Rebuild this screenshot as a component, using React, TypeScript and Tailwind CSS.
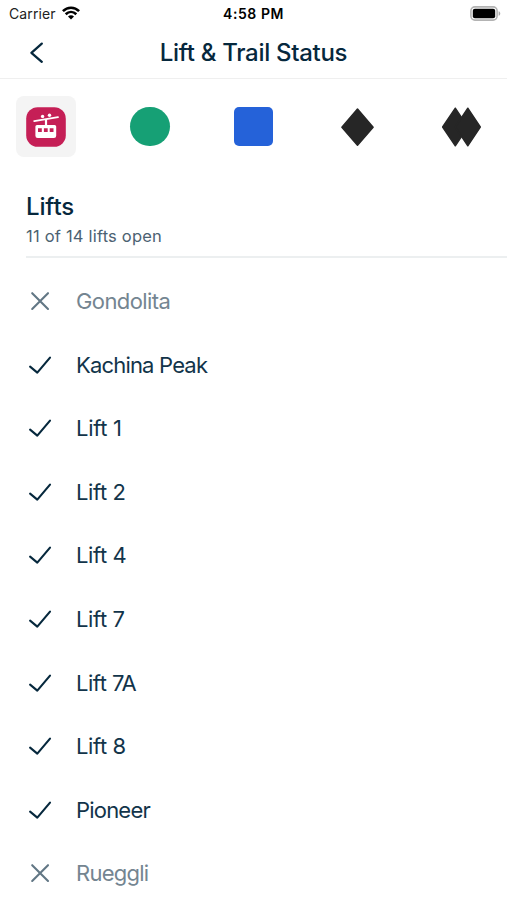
import React from "react";

type Lift = { name: string; open: boolean; spacing: string };

const lifts: Lift[] = [
  { name: "Gondolita", open: false, spacing: "tracking-[-0.6px]" },
  { name: "Kachina Peak", open: true, spacing: "tracking-[-0.82px]" },
  { name: "Lift 1", open: true, spacing: "tracking-[-0.3px]" },
  { name: "Lift 2", open: true, spacing: "tracking-[-0.4px]" },
  { name: "Lift 4", open: true, spacing: "tracking-[-0.4px]" },
  { name: "Lift 7", open: true, spacing: "tracking-[-0.4px]" },
  { name: "Lift 7A", open: true, spacing: "tracking-[-0.5px]" },
  { name: "Lift 8", open: true, spacing: "tracking-[-0.4px]" },
  { name: "Pioneer", open: true, spacing: "tracking-[-0.8px]" },
  { name: "Rueggli", open: false, spacing: "tracking-[-0.75px]" },
];

function StatusBar() {
  return (
    <div className="grid h-[27px] grid-cols-3 items-center pl-[9px] pr-[6px] text-[14px] text-black">
      <div className="flex items-center gap-[6px]">
        <span className="tracking-[0.1px] text-[#222]">Carrier</span>
        <svg className="-mt-[2px]" width="18" height="14" viewBox="0 0 18 14" fill="none" stroke="#000" strokeWidth="2.6">
          <path d="M0.9 5.2C5.5 0.5 12.5 0.5 17.1 5.2" />
          <path d="M3.7 8.3C6.8 5.3 11.2 5.3 14.3 8.3" />
          <path d="M6 10.5C7.7 8.7 10.3 8.7 12 10.5L9 13.5Z" fill="#000" stroke="none" />
        </svg>
      </div>
      <span className="-ml-[3px] text-center font-semibold tracking-[0.55px]">4:58 PM</span>
      <svg className="justify-self-end" width="31" height="15" viewBox="0 0 31 15">
        <rect x="0.9" y="0.9" width="26.2" height="13.2" rx="4" fill="#fff" stroke="#b3b3b3" strokeWidth="1.6" />
        <rect x="2.8" y="2.8" width="22.4" height="9.4" rx="2" fill="#000" />
        <path d="M28.6 5.2C30.8 5.8 30.8 9.2 28.6 9.8Z" fill="#a9a9a9" />
      </svg>
    </div>
  );
}

function GondolaIcon() {
  return (
    <svg width="40" height="40" viewBox="0 0 40 40">
      <rect x="0.2" y="0.2" width="39.6" height="39.6" rx="11.5" fill="#c51f56" />
      <path d="M8.2 14.2L32 10.2" stroke="#fff" strokeWidth="1.8" strokeLinecap="round" />
      <circle cx="16.6" cy="9.4" r="1.7" fill="#fff" />
      <circle cx="23.5" cy="8.2" r="1.7" fill="#fff" />
      <path d="M20 12V19" stroke="#fff" strokeWidth="2.2" />
      <path
        fillRule="evenodd"
        fill="#fff"
        d="M11 18H28.6Q30.2 18 30.2 19.6V28.7Q30.2 31 27.9 31H11.7Q9.4 31 9.4 28.7V19.6Q9.4 18 11 18ZM12 21.2V25H15.8V21.2ZM17.9 21.2V25H21.7V21.2ZM23.7 21.2V25H27.5V21.2Z"
      />
    </svg>
  );
}

function DiamondIcon() {
  return (
    <svg width="40" height="40" viewBox="0 0 40 40">
      <path
        d="M20.5 2.1L36.1 20.2L20.5 38.3L4.9 20.2Z"
        fill="#262626"
        stroke="#262626"
        strokeWidth="1.5"
        strokeLinejoin="round"
      />
    </svg>
  );
}

function DoubleDiamondIcon() {
  return (
    <svg width="40" height="40" viewBox="0 0 40 40" fill="#262626" stroke="#262626" strokeWidth="1.4" strokeLinejoin="round">
      <path d="M14.3 1.2L26.8 20L14.3 38.8L1.6 20Z" />
      <path d="M26.8 1.2L39.3 20L26.8 38.8L14.3 20Z" />
    </svg>
  );
}

function LiftRow({ lift }: { lift: Lift }) {
  return (
    <li className="flex h-[63.55px] items-center gap-[24px] pl-[28px]">
      {lift.open ? (
        <svg width="24" height="24" viewBox="0 0 24 24" fill="none" stroke="#06283d" strokeWidth="2.1" strokeLinecap="round" strokeLinejoin="round">
          <path d="M2.1 13.6L9.3 19.6L22 4.6" />
        </svg>
      ) : (
        <svg width="24" height="24" viewBox="0 0 24 24" fill="none" stroke="#627785" strokeWidth="2.1" strokeLinecap="round">
          <path d="M4.2 4.2L20 20M20 4.2L4.2 20" />
        </svg>
      )}
      <span className={`text-[22px] leading-[28px] ${lift.spacing} ${lift.open ? "text-[#12344a]" : "text-[#748591]"}`}>
        {lift.name}
      </span>
    </li>
  );
}

export default function App() {
  return (
    <div className="h-[900px] w-full overflow-hidden bg-white font-['Inter','Liberation_Sans',sans-serif]">
      <StatusBar />
      <header className="grid h-[52px] grid-cols-[60px_1fr_60px] items-center border-b border-[#efefef]">
        <button type="button" aria-label="Back" className="pl-[28px]">
          <svg width="18" height="24" viewBox="0 0 18 24" fill="none" stroke="#06283d" strokeWidth="2.3" strokeLinecap="round" strokeLinejoin="round">
            <path d="M13.8 2.6L3.4 11.8L13.8 20.8" />
          </svg>
        </button>
        <h1 className="text-center text-[24px] font-medium tracking-[-0.3px] text-[#06283d]">Lift &amp; Trail Status</h1>
      </header>
      <nav className="flex justify-between px-4 pt-[17px]">
        <button type="button" aria-label="Lifts" className="grid h-[61px] w-[60px] place-items-center rounded-[8px] bg-[#f4f4f4]">
          <GondolaIcon />
        </button>
        <button type="button" aria-label="Green trails" className="grid h-[61px] w-[60px] place-items-center">
          <span className="size-[39.5px] rounded-full bg-[#16a075]" />
        </button>
        <button type="button" aria-label="Blue trails" className="grid h-[61px] w-[60px] place-items-center">
          <span className="size-[39.5px] rounded-[5px] bg-[#2562d9]" />
        </button>
        <button type="button" aria-label="Black trails" className="grid h-[61px] w-[60px] place-items-center">
          <DiamondIcon />
        </button>
        <button type="button" aria-label="Double black trails" className="grid h-[61px] w-[60px] place-items-center">
          <DoubleDiamondIcon />
        </button>
      </nav>
      <section className="ml-[26px] border-b-2 border-[#eceff0] pt-[34px] pb-[8px]">
        <h2 className="text-[24px] leading-[32px] font-medium tracking-[-0.15px] text-[#06283d]">Lifts</h2>
        <p className="pt-[2px] text-[16.5px] leading-[23px] tracking-[0.2px] text-[#4c6272]">11 of 14 lifts open</p>
      </section>
      <ul className="pt-[11.5px]">
        {lifts.map((lift) => (
          <LiftRow key={lift.name} lift={lift} />
        ))}
      </ul>
    </div>
  );
}
